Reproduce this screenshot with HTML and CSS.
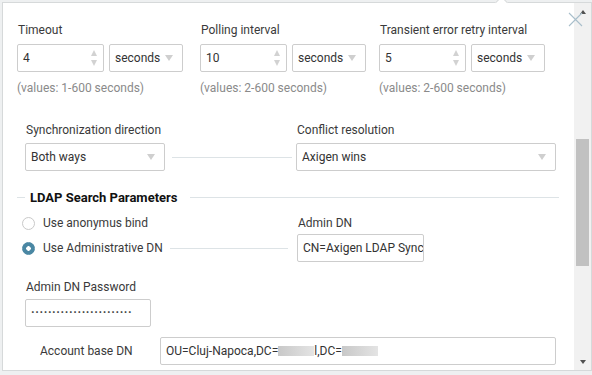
FILE: index.html
```html
<!DOCTYPE html>
<html lang="en">

<head>
  <meta charset="UTF-8">
  <meta name="viewport" content="width=device-width, initial-scale=1.0">
  <title>LDAP Synchronization</title>

  <link rel="stylesheet" href="styles.css">

</head>

<body>

  <div class="dialog">
    <span class="notch"></span>

    <div class="content">

      <div class="intervals">
        <div class="group">
          <label>Timeout</label>
          <div class="pair">
            <div class="field num"><span>4</span><span class="spin"><i class="up"></i><i class="down"></i></span></div>
            <div class="field sel"><span>seconds</span><i class="caret"></i></div>
          </div>
          <p class="hint">(values: 1-600 seconds)</p>
        </div>
        <div class="group">
          <label>Polling interval</label>
          <div class="pair">
            <div class="field num"><span>10</span><span class="spin"><i class="up"></i><i class="down"></i></span></div>
            <div class="field sel"><span>seconds</span><i class="caret"></i></div>
          </div>
          <p class="hint">(values: 2-600 seconds)</p>
        </div>
        <div class="group">
          <label>Transient error retry interval</label>
          <div class="pair">
            <div class="field num"><span>5</span><span class="spin"><i class="up"></i><i class="down"></i></span></div>
            <div class="field sel"><span>seconds</span><i class="caret"></i></div>
          </div>
          <p class="hint">(values: 2-600 seconds)</p>
        </div>
      </div>

      <div class="sync">
        <div class="group">
          <label>Synchronization direction</label>
          <div class="field sel-wide"><span>Both ways</span><i class="caret"></i></div>
        </div>
        <span class="connector"></span>
        <div class="group">
          <label>Conflict resolution</label>
          <div class="field sel-conflict"><span>Axigen wins</span><i class="caret"></i></div>
        </div>
      </div>

      <div class="legend">
        <span class="legend-line short"></span>
        <span class="legend-text">LDAP Search Parameters</span>
        <span class="legend-line"></span>
      </div>

      <div class="bind">
        <div class="radio"><span class="dot"></span>Use anonymus bind</div>
        <label class="bind-label">Admin DN</label>
        <div class="radio"><span class="dot checked"></span>Use Administrative DN<span class="radio-line"></span></div>
        <div class="field admin-dn"><span class="clip">CN=Axigen LDAP Sync</span></div>
      </div>

      <div class="password">
        <label>Admin DN Password</label>
        <div class="field pass"><span class="dots">························</span></div>
      </div>

      <div class="base">
        <label>Account base DN</label>
        <div class="field base-dn"><span>OU=Cluj-Napoca,DC=<i class="redact"></i>l,DC=<i class="redact"></i></span></div>
      </div>

    </div>

    <div class="scrollbar">
      <div class="sb-btn"><i class="sb-up"></i></div>
      <div class="sb-track"><div class="sb-thumb"></div></div>
      <div class="sb-btn"><i class="sb-down"></i></div>
    </div>

    <svg class="close" width="15" height="15" viewBox="0 0 15 15">
      <path d="M1 1 L14 14 M14 1 L1 14" stroke="#a9bfcb" stroke-width="1.1" fill="none"/>
    </svg>
  </div>

</body>

</html>
```

FILE: styles.css
```css
body {
  margin: 0;
  padding: 2px 0 0 2px;
  background: #eef0f1;
  font-family: Roboto, "Liberation Sans", sans-serif;
  font-size: 12px;
  color: #3a3a3a;
}

.dialog {
  position: relative;
  display: flex;
  width: 588px;
  height: 367px;
  border: 1px solid #d6d9da;
  background: #fff;
}

.notch {
  position: absolute;
  top: -5px;
  left: 494px;
  width: 8px;
  height: 8px;
  background: #fff;
  border-top: 1px solid #d6d9da;
  border-left: 1px solid #d6d9da;
  transform: rotate(45deg);
}

.content {
  flex: 1;
  padding: 19px 15px 0 14px;
  overflow: hidden;
}

label {
  display: block;
  line-height: 16px;
  padding-left: 1px;
}

.field {
  box-sizing: border-box;
  height: 28px;
  border: 1px solid #cdcdcd;
  border-radius: 2px;
  padding: 0 9px 0 5px;
  display: flex;
  align-items: center;
  justify-content: space-between;
  white-space: nowrap;
  overflow: hidden;
  color: #333;
}

/* intervals */

.intervals {
  display: grid;
  grid-template-columns: 183px 179px auto;
}

.intervals label {
  margin-bottom: 6px;
}

.pair {
  display: flex;
  gap: 5px;
}

.num {
  width: 87px;
  padding-right: 6px;
}

.sel {
  width: 74px;
}

.spin {
  display: flex;
  flex-direction: column;
  gap: 4px;
}

.spin .up {
  border-left: 3px solid transparent;
  border-right: 3px solid transparent;
  border-bottom: 6px solid #d2d2d2;
}

.spin .down {
  border-left: 3px solid transparent;
  border-right: 3px solid transparent;
  border-top: 6px solid #d2d2d2;
}

.caret {
  border-left: 4px solid transparent;
  border-right: 4px solid transparent;
  border-top: 6px solid #cfcfcf;
}

.hint {
  margin: 8px 0 0;
  line-height: 16px;
  color: #8a8a8a;
}

/* sync */

.sync {
  display: flex;
  margin-top: 26px;
  padding-left: 8px;
}

.sync label {
  margin-bottom: 5px;
}

.sel-wide {
  width: 140px;
}

.sel-conflict {
  width: 260px;
}

.connector {
  align-self: flex-end;
  width: 120px;
  height: 1px;
  margin: 0 4px 13px 7px;
  background: #dde3e6;
}

/* legend */

.legend {
  display: flex;
  align-items: center;
  margin-top: 18px;
  height: 16px;
}

.legend-line {
  flex: 1;
  height: 1px;
  background: #dde3e6;
}

.legend-line.short {
  flex: none;
  width: 8px;
}

.legend-text {
  padding: 0 12px 0 5px;
  font-size: 13px;
  font-weight: bold;
  color: #111;
}

/* bind */

.bind {
  display: grid;
  grid-template-columns: 270px auto;
  column-gap: 5px;
  row-gap: 3px;
  margin-top: 10px;
  padding-left: 5px;
}

.radio {
  display: flex;
  align-items: center;
  gap: 8px;
  line-height: 16px;
}

.dot {
  box-sizing: border-box;
  width: 13px;
  height: 13px;
  border: 1px solid #c9c9c9;
  border-radius: 50%;
  background: #fff;
  position: relative;
}

.dot.checked {
  border-color: #4a87a3;
  background: radial-gradient(circle, #fff 0 2px, #4a87a3 2.5px);
}

.radio-line {
  flex: 1;
  height: 1px;
  margin: 0 4px 0 -1px;
  background: #dde3e6;
}

.admin-dn {
  width: 127px;
  padding-right: 0;
}

.clip {
  overflow: hidden;
}

/* password */

.password {
  margin-top: 17px;
  padding-left: 8px;
}

.password label {
  margin-bottom: 4px;
}

.pass {
  width: 126px;
}

.dots {
  letter-spacing: 0.6px;
  font-weight: bold;
  color: #444;
}

/* base dn */

.base {
  display: flex;
  align-items: center;
  margin-top: 10px;
}

.base label {
  width: 120px;
  padding-left: 23px;
}

.base-dn {
  width: 396px;
}

.redact {
  display: inline-block;
  width: 36px;
  height: 10px;
  vertical-align: -1px;
  background: linear-gradient(90deg, #c8c8c8, #e4e4e4);
}

/* scrollbar */

.scrollbar {
  width: 17px;
  display: flex;
  flex-direction: column;
  background: #f1f1f1;
}

.sb-btn {
  height: 17px;
  display: flex;
  align-items: center;
  justify-content: center;
}

.sb-up {
  border-left: 3px solid transparent;
  border-right: 3px solid transparent;
  border-bottom: 4px solid #505050;
}

.sb-down {
  border-left: 3px solid transparent;
  border-right: 3px solid transparent;
  border-top: 4px solid #505050;
}

.sb-track {
  flex: 1;
}

.sb-thumb {
  height: 127px;
  margin: 119px 2px 0;
  background: #c1c1c1;
}

.close {
  position: absolute;
  left: 565px;
  top: 9px;
}
```
